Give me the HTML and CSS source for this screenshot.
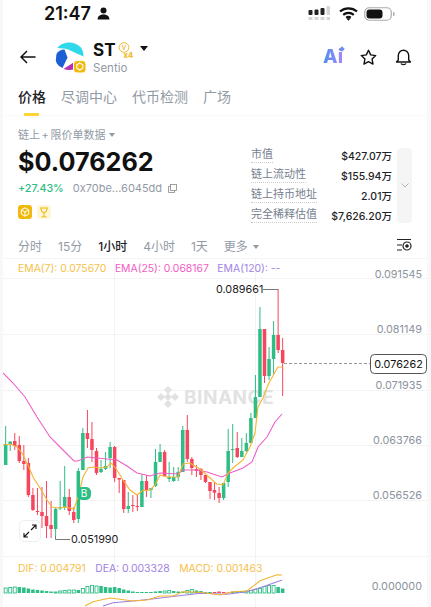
FILE: index.html
```html
<!DOCTYPE html>
<html lang="zh">
  <head>
    <meta charset="utf-8" />
    <title>ST</title>
    <link rel="stylesheet" href="styles.css">
  </head>
  <body>
    <div id="app">
      <div class="status">
        <span class="clock">21:47</span>
        <svg class="person" width="13" height="13" viewBox="0 0 13 13"><circle cx="6.5" cy="3.4" r="3"/><path d="M.6 12.6c0-3.6 2.6-5 5.9-5s5.900 1.400 5.900 5z"/></svg>
        <span class="status-right">
          <svg width="24" height="16" viewBox="0 0 24 16">
            <rect x="0.500" y="4" width="4" height="5" rx="1" fill="#222"/>
            <rect x="6.500" y="3.500" width="4" height="5.500" rx="1" fill="#222"/>
            <rect x="12.500" y="2" width="4" height="7" rx="1" fill="#222"/>
            <rect x="18.500" y="0" width="3.500" height="9" rx="1" fill="#d5d5d5"/>
            <rect x="0.500" y="11" width="4" height="3" fill="#d5d5d5"/>
            <rect x="6.500" y="11" width="4" height="3" fill="#d5d5d5"/>
            <rect x="12.500" y="11" width="4" height="3" fill="#d5d5d5"/>
            <rect x="18.500" y="11" width="3.500" height="3" fill="#d5d5d5"/>
          </svg>
          <svg width="19" height="14" viewBox="0 0 19 14" fill="none" stroke="#111" stroke-width="2.200">
            <path d="M1 4.500c5-4.300 12-4.300 17 0"/>
            <path d="M4.200 7.800c3-2.500 7.600-2.500 10.600 0"/>
            <path d="M7.200 10.600c1.400-1 3.200-1 4.600 0"/>
            <path d="M9.500 13.500l-1.800-2h3.600z" fill="#111" stroke-width="0.500"/>
          </svg>
          <svg width="32" height="14" viewBox="0 0 32 14">
            <rect x="0.750" y="0.750" width="26.500" height="12.500" rx="4.500" fill="#fff" stroke="#aaa" stroke-width="1.200"/>
            <rect x="2.500" y="2.500" width="16" height="9" rx="3" fill="#111"/>
            <rect x="29" y="5" width="1.500" height="4" rx="0.700" fill="#aaa"/>
          </svg>
        </span>
      </div>

      <div class="nav">
        <svg class="back" width="16" height="14" viewBox="0 0 16 14" fill="none" stroke="#111" stroke-width="1.500"><path d="M15.500 7H1M7 1L1 7l6 6"/></svg>
        <svg class="logo" width="33" height="33" viewBox="0 0 33 33">
          <circle cx="16" cy="16" r="15.500" fill="#fff"/>
          <path d="M3.500 7C7 1.500 19-1.500 27 6.500c1.500 2 2.500 5 2.500 9L14 8.500c-3-1.500-7-1-10.500-1.500z" fill="#2fd9ea"/>
          <path d="M2.500 13C4 10 7 8.500 10.500 8.500L13.500 16.500 8.500 27C5 25.500 2 22.500 1.800 19z" fill="#1b5fd4"/>
          <path d="M9.500 28l10-6.500v7c-3 .7-7 .5-10-.5z" fill="#b92fb4"/>
          <rect x="19.500" y="19.500" width="12.500" height="12.500" rx="3.500" fill="#f0b90b" stroke="#fff" stroke-width="1"/>
          <path d="M25.800 22l3 1.800v3.400l-3 1.800-3-1.800v-3.400z" fill="none" stroke="#fff" stroke-width="1.100"/>
        </svg>
        <div class="token">
          <div class="token-top">
            <span class="symbol">ST</span>
            <span class="vbadge">
              <svg width="12" height="11" viewBox="0 0 12 11"><circle cx="6" cy="5.500" r="4.800" fill="none" stroke="#f3b92f" stroke-width="1"/><text x="6" y="7.500" text-anchor="middle" class="vletter">V</text></svg>
              <span class="xfour">x4</span>
            </span>
            <span class="caret caret-black"></span>
          </div>
          <span class="token-name">Sentio</span>
        </div>
        <span class="nav-actions">
          <span class="ai">Ai<i></i></span>
          <svg class="star" width="17" height="17" viewBox="0 0 17 17" fill="none" stroke="#111" stroke-width="1.400" stroke-linejoin="round"><path d="M8.500 1.300l2.200 4.600 5 .7-3.600 3.500.9 5-4.500-2.400L4 15.100l.9-5L1.300 6.600l5-.7z"/></svg>
          <svg width="17" height="18" viewBox="0 0 17 18" fill="none" stroke="#111" stroke-width="1.400" stroke-linejoin="round"><path d="M3.300 12V7.500a5.200 5.200 0 0 1 10.400 0V12l1.800 2H1.500z"/><path d="M6 15.500c.8 1.500 4.200 1.500 5 0"/></svg>
        </span>
      </div>

      <div class="tabs">
        <span class="tab active">价格</span>
        <span class="tab">尽调中心</span>
        <span class="tab">代币检测</span>
        <span class="tab">广场</span>
      </div>

      <div class="info">
        <div class="info-left">
          <div class="source">链上 + 限价单数据 <span class="caret caret-gray"></span></div>
          <div class="price">$0.076262</div>
          <div class="meta">
            <span class="change">+27.43%</span>
            <span class="address">0x70be...6045dd</span>
            <svg width="9" height="9" viewBox="0 0 9 9" fill="none" stroke="#888" stroke-width="0.800"><rect x="2.500" y="0.500" width="6" height="6"/><path d="M2.500 2.500H.5v6h6v-2"/></svg>
          </div>
          <div class="badges">
            <span class="badge badge-bnb">
              <svg width="10" height="10" viewBox="0 0 10 10" fill="none" stroke="#fff" stroke-width="1"><path d="M5 .8l3.700 2.100v4.200L5 9.200 1.300 7.100V2.900zM1.300 2.900L5 5l3.700-2.100M5 5v4.200"/></svg>
            </span>
            <span class="badge badge-cup">
              <svg width="10" height="11" viewBox="0 0 10 11" fill="none" stroke="#f0b90b" stroke-width="1.100"><path d="M.8 1h8.400M2 1c0 3 1 4.500 3 4.500S8 4 8 1M5 5.500v3.500M2.500 9.800h5"/></svg>
            </span>
          </div>
        </div>
        <div class="stats">
          <div class="stat"><span class="stat-label">市值</span><span class="stat-value">$427.07万</span></div>
          <div class="stat"><span class="stat-label">链上流动性</span><span class="stat-value">$155.94万</span></div>
          <div class="stat"><span class="stat-label">链上持币地址</span><span class="stat-value">2.01万</span></div>
          <div class="stat"><span class="stat-label">完全稀释估值</span><span class="stat-value">$7,626.20万</span></div>
        </div>
        <div class="expand">
          <svg width="8" height="5" viewBox="0 0 8 5" fill="none" stroke="#aaa" stroke-width="0.900"><path d="M.5.500L4 4 7.500.5"/></svg>
        </div>
      </div>

      <div class="intervals">
        <span>分时</span>
        <span>15分</span>
        <span class="current">1小时</span>
        <span>4小时</span>
        <span>1天</span>
        <span>更多 <span class="caret caret-gray"></span></span>
        <svg class="tune" width="16" height="14" viewBox="0 0 16 14" fill="none" stroke="#222" stroke-width="1.200"><path d="M1 1.500h14M1 7h5M1 12h5"/><circle cx="11" cy="8" r="4"/><circle cx="11" cy="8" r="1.200" fill="#222"/></svg>
      </div>

      <div class="chart">
        <svg id="plot" width="424" height="349" viewBox="3 258 424 349"></svg>
        <div class="legend legend-ema">
          <span class="c-yellow">EMA(7): 0.075670</span>
          <span class="c-pink">EMA(25): 0.068167</span>
          <span class="c-purple">EMA(120): --</span>
        </div>
        <div class="legend legend-macd">
          <span class="c-yellow">DIF: 0.004791</span>
          <span class="c-purple">DEA: 0.003328</span>
          <span class="c-yellow">MACD: 0.001463</span>
        </div>
        <div class="fullscreen">
          <svg width="14" height="14" viewBox="0 0 14 14" fill="none" stroke="#111" stroke-width="1.100"><path d="M8 6l5-5M9 1h4v4M6 8l-5 5M1 9v4h4"/></svg>
        </div>
      </div>
    </div>
    <script src="chart.js"></script>
  </body>
</html>
```
FILE: styles.css
```css
* { box-sizing: border-box; }

html, body { margin: 0; padding: 0; height: 607px; overflow: hidden; }

body {
    background: #f8f8f8;
    font-family: Inter, "Noto Sans CJK SC", sans-serif;
    color: #1e2329;
}

#app {
    width: 424px;
    height: 607px;
    margin-left: 3px;
    background: #fff;
    overflow: hidden;
}

/* status bar */
.status {
    display: flex;
    align-items: center;
    height: 27px;
    padding-left: 41px;
}

.clock { font-size: 18px; font-weight: 600; color: #111; letter-spacing: 0; }
.person { margin-left: 6px; fill: #111; }

.status-right {
    display: flex;
    align-items: center;
    gap: 6.500px;
    margin-left: auto;
    padding-right: 31px;
}

/* header */
.nav {
    display: flex;
    align-items: center;
    height: 40px;
    margin-top: 10px;
    padding-left: 17px;
}

.back { margin-right: 18px; }
.logo { margin-right: 6px; }
.token { display: flex; flex-direction: column; }
.token-top { display: flex; align-items: center; height: 22px; }
.symbol { font-size: 17px; font-weight: 700; color: #111; }
.vbadge { position: relative; width: 17px; height: 16px; margin-left: 3px; }
.vbadge svg { display: block; }
.vletter { font-size: 6px; font-weight: 600; fill: #f3b92f; }

.xfour {
    position: absolute;
    left: 5px; top: 11px;
    font-size: 7.500px;
    font-weight: 800;
    line-height: 6px;
    color: #f3b92f;
}

.token-name { font-size: 11.500px; color: #929aa5; line-height: 14px; }

.caret {
    display: inline-block;
    width: 0; height: 0;
    border-style: solid;
    border-color: transparent;
    border-bottom-width: 0;
}

.caret-black {
    margin: 0 0 3px 5px;
    border-width: 5px 4px 0;
    border-top-color: #111;
}

.caret-gray {
    margin: 0 0 2px 2px;
    border-width: 4px 3.500px 0;
    border-top-color: #929aa5;
}

.nav-actions {
    display: flex;
    align-items: center;
    gap: 16px;
    margin-left: auto;
    padding-right: 15px;
}

.star { margin-right: 2px; }

.ai {
    position: relative;
    width: 21px;
    font-size: 19px;
    font-weight: 800;
    line-height: 22px;
    background: linear-gradient(90deg, #4f8df2, #a98bf3);
    -webkit-background-clip: text;
    background-clip: text;
    color: transparent;
}

.ai i {
    position: absolute;
    top: 1px; right: 0;
    width: 4px; height: 4px;
    background: #6f8ff0;
    transform: rotate(45deg);
}

/* tabs */
.tabs {
    display: flex;
    gap: 15px;
    height: 39px;
    padding: 12px 0 0 15px;
    font-size: 14px;
    color: #929aa5;
    border-bottom: 1px solid #fafafa;
}

.tab { position: relative; line-height: 16px; }
.tab.active { color: #1e2329; font-weight: 500; }

.tab.active::after {
    content: "";
    position: absolute;
    left: 6px; top: 24px;
    width: 15px; height: 3px;
    background: #fcd535;
}

/* price block */
.info {
    display: flex;
    padding: 12px 15px 0;
}

.info-left { flex: 1; }

.source {
    height: 14px;
    font-size: 11px;
    line-height: 14px;
    word-spacing: -1.500px;
    color: #929aa5;
}

.price {
    height: 34px;
    margin-top: 3px;
    font-size: 25.200px;
    font-weight: 700;
    line-height: 34px;
    color: #111;
}

.meta {
    display: flex;
    align-items: center;
    height: 16px;
    margin-top: 1px;
    gap: 9px;
}

.change { font-size: 10.700px; font-weight: 500; color: #2ebd85; }
.address { margin-right: -3px; font-size: 11px; color: #929aa5; }

.badges { display: flex; gap: 5px; margin-top: 9px; }

.badge {
    display: flex;
    align-items: center;
    justify-content: center;
    width: 14px; height: 14px;
    border-radius: 3px;
}

.badge-bnb { background: #f0b90b; }
.badge-cup { background: #fdf6d8; }

.stats { width: 141px; margin-top: 17px; }

.stat {
    display: flex;
    align-items: center;
    justify-content: space-between;
    height: 20px;
    font-size: 11px;
}

.stat-label {
    line-height: 15px;
    color: #76808f;
    border-bottom: 1px dotted #ccc;
}

.stat-value { font-size: 10.500px; font-weight: 500; color: #1e2329; }

.expand {
    display: flex;
    align-items: center;
    justify-content: center;
    width: 15px; height: 75px;
    margin: 20px 0 0 5px;
    border-radius: 4px;
    background: #f5f5f5;
}

/* interval row */
.intervals {
    display: flex;
    align-items: center;
    gap: 16px;
    height: 26px;
    margin-top: 7px;
    padding: 0 15px;
    font-size: 12px;
    color: #929aa5;
}

.intervals .current { color: #1e2329; font-weight: 500; }
.tune { margin-left: auto; }

/* chart canvas */
.chart {
    position: relative;
    height: 349px;
    border-top: 1px solid #f5f5f5;
}

#plot { position: absolute; left: 0; top: -1px; }

.grid { stroke: #f3f3f3; stroke-width: 1; }
.axis { font-size: 10.800px; fill: #8c939d; text-anchor: end; }
.mark { font-size: 10.800px; fill: #222; }
.leader { stroke: #777; stroke-width: 1; fill: none; }
.last-line { stroke: #999; stroke-width: 1; stroke-dasharray: 3 2; }
.tag { fill: #fff; stroke: #555; stroke-width: 1; }
.tag-text { font-size: 10.800px; fill: #111; text-anchor: middle; }
.wm-icon { fill: #e2e2e2; }
.wm-text { font-size: 19px; font-weight: 700; fill: #e2e2e2; letter-spacing: 0.500px; }
.line { fill: none; stroke-width: 1.100; }
.buy-text { font-size: 10px; fill: #fff; text-anchor: middle; }

.legend {
    position: absolute;
    left: 15px;
    display: flex;
    font-size: 10.400px;
    line-height: 14px;
    white-space: nowrap;
}

.legend-ema { top: 3px; gap: 8.500px; }
.legend-macd { top: 303px; gap: 9.500px; }

.c-yellow { color: #f5c14b; }
.c-pink { color: #f25cc4; }
.c-purple { color: #a183e3; }

.fullscreen {
    position: absolute;
    left: 16px; top: 261px;
    display: flex;
    align-items: center;
    justify-content: center;
    width: 22px; height: 22px;
    border: 1px solid #eee;
    border-radius: 5px;
    background: rgba(255, 255, 255, 0.8);
}
```
FILE: chart.js
```js
// all chart coordinates are screen pixels, the svg viewBox starts at 3,258
var NS = "http://www.w3.org/2000/svg";
var plot = document.getElementById("plot");
var GREEN = "#2ebd85", RED = "#f6465d", YELLOW = "#f3b532", PINK = "#ee5fc8", PURPLE = "#a07fe0";

function add(tag, attrs, text) {
  var el = document.createElementNS(NS, tag);
  for (var k in attrs) el.setAttribute(k, attrs[k]);
  if (text) el.textContent = text;
  plot.appendChild(el);
  return el;
}

function candleX(i) { return 5.67 + 4.541 * i; }

// colour, wick top, wick bottom, body top, body bottom
var candles = [
  ["g",426,465,444,465],["g",441,451,441.7,444],["r",433,450,441,446],["r",436,463,445,461],
  ["r",445,470,461,464],["r",458,497,463,495],["r",488,511,495,510],["r",488,515,511,512],
  ["r",487,528,512,516],["r",481,538,516,526],["r",501,538,525,529],["g",508,537,509,529],
  ["g",481,510,507,508.5],["g",466,510,497,507],["r",489,515,497,511],["r",507,523,512,520],
  ["g",468,523,471,519],["g",428,470,433,470],["r",410,448,433,439],["r",422,462,439,450],
  ["r",448,475,451,473],["g",460,473,469,472],["g",452,470,466,469],["g",442,468,447,458],
  ["r",446,482,447,478],["r",478,493,478,479.5],["r",480,513,480,509],["g",492,513,506,509],
  ["r",495,512,505,506],["r",494,511,506,507],["g",474,507,481,507],["r",475,497,481,490],
  ["g",488,498,488,490],["g",449,487,462,486],["g",444,462,452,462],["r",450,477,452,476],
  ["g",462,482,477,479],["g",467,482,477,481],["g",467,481,472,477],["g",426,472,430,472],
  ["r",415,462,430,459],["r",457,475,459,468],["r",465,477,469,471],["r",468,480,469,475],
  ["r",475,483,475,482],["r",482,499,482,491],["r",482,500,490,492.7],["r",487,503,493,498],
  ["g",483,500,483,498],["g",429,487,451,482],["g",424,463,449,450],["r",432,458,448,457],
  ["g",438,457,451,457],["g",433,452,443,451],["g",413,443,418,443],["g",375,418,397,418],
  ["g",307,397,329,397],["r",329,383,329,376],["g",347,380,359,376],["g",321,375,335,359],
  ["r",289,353,335,350],["r",338,396,350,363]
];

var ema7 = [[3,445],[10,444],[17,447],[22,453],[28,465],[33,477],[40,488],[47,500],[52,507],[58,508],
  [65,507],[70,508],[74,509],[78,497],[83,477],[88,468],[93,467],[100,468],[107,467],[111,463],
  [117,470],[123,480],[130,490],[137,495],[142,491],[150,490],[155,485],[160,475],[167,477],[178,477],
  [183,464],[190,463],[200,469],[210,478],[216.7,484],[223,485],[228,473],[233,468],[243,460],[250,447],
  [255,433],[258,407],[263,398],[268,385],[275,372],[278,367],[282,367]];

var ema25 = [[3,373],[13,383],[25,397],[37,417],[50,437],[63,450],[74,461],[78,461],[87,457],[97,458],
  [107,459],[117,460],[127,466],[137,473],[150,476],[160,473],[178,474],[183,470],[197,470],[207,472],
  [210,473],[222,477],[230,473],[243,468],[252,462],[258,447],[267,437],[275,422],[282,414]];

var dif = [[85,606],[93,601.7],[110,598],[120,599.3],[133,601],[147,600],[160,596],[173,596],[183,591.7],
  [200,592.3],[220,595],[233,591.7],[247,591],[260,580.7],[277,574.7],[282,575]];

var dea = [[103,606],[113,602.7],[133,601],[150,599.3],[177,596],[200,593.3],[227,594.3],[247,591.7],
  [263,586.7],[282,580]];

// height of each macd bar, negative is red; second value 1 = hollow
var macd = [[5.5,1],[6,1],[6.5,1],[6,0],[5.5,0],[4.5,0],[3.5,0],[3,0],[2.5,0],[2,0],[1.5,0],[1.5,1],[2.5,1],[3,1],
  [3.5,1],[3.5,1],[3,0],[5,1],[7,1],[8,1],[7.5,1],[7,0],[6,0],[5.5,0],[6,0],[5,0],[3.5,0],[2.5,0],[1.5,0],[1,0],
  [1,0],[1,0],[1,0],[1.5,0],[2,0],[2.5,1],[3,1],[2,0],[1.5,0],[1.5,0],[3,1],[4,1],[2.5,0],[2,0],[1,0],[1,0],
  [-1,0],[-1.5,0],[-1,0],[-0.5,0],[1.5,0],[2,0],[2,0],[2.5,1],[3,1],[4,1],[5,1],[7,1],[8,1],[8,1],[6,0],[4.5,0]];

function points(list) {
  return list.map(function (p) { return p[0] + "," + p[1]; }).join(" ");
}

// grid
[278.5, 334.5, 390.5, 445.5, 500.5, 556.5].forEach(function (y) {
  add("line", { x1: 3, x2: 427, y1: y, y2: y, "class": "grid" });
});
[114.5, 255.5].forEach(function (x) {
  add("line", { x1: x, x2: x, y1: 258, y2: 607, "class": "grid" });
});

// watermark
add("path", { "class": "wm-icon", d: "M168 386l4 4-4 4-4-4zM161 393l4 4-4 4-4-4zM175 393l4 4-4 4-4-4zM168 393l4 4-4 4-4-4zM168 400l4 4-4 4-4-4z" });
add("text", { "class": "wm-text", x: 184, y: 404 }, "BINANCE");

// candles
candles.forEach(function (c, i) {
  var x = candleX(i), color = c[0] === "g" ? GREEN : RED;
  add("line", { x1: x, x2: x, y1: c[1], y2: c[2], stroke: color, "stroke-width": 1 });
  add("rect", { x: x - 1.75, y: c[3], width: 3.5, height: Math.max(c[4] - c[3], 1), fill: color });
});

add("polyline", { "class": "line", points: points(ema25), stroke: PINK });
add("polyline", { "class": "line", points: points(ema7), stroke: YELLOW });

// buy marker
add("rect", { x: 77, y: 487, width: 14, height: 13, rx: 5, fill: GREEN });
add("text", { "class": "buy-text", x: 84, y: 497 }, "B");

// high and low labels
add("polyline", { "class": "leader", points: "263,289.5 278,289.5" });
add("text", { "class": "mark", x: 216, y: 293 }, "0.089661");
add("polyline", { "class": "leader", points: "55.5,536 55.5,539.5 70,539.5" });
add("text", { "class": "mark", x: 71, y: 543 }, "0.051990");

// macd
macd.forEach(function (m, i) {
  var h = Math.abs(m[0]), x = candleX(i), color = m[0] < 0 ? RED : GREEN;
  if (m[1]) {
    add("rect", { x: x - 1.5, y: 593 - h + 0.5, width: 3, height: h - 0.5, fill: "#fff", stroke: color, "stroke-width": 0.9 });
  } else {
    add("rect", { x: x - 1.75, y: 593 - h, width: 3.5, height: h, fill: color });
  }
});
add("polyline", { "class": "line", points: points(dea), stroke: PURPLE });
add("polyline", { "class": "line", points: points(dif), stroke: YELLOW });

// axis
[["0.091545", 278], ["0.081149", 333], ["0.071935", 389], ["0.063766", 444], ["0.056526", 499], ["0.000000", 590]].forEach(function (a) {
  add("text", { "class": "axis", x: 422, y: a[1] }, a[0]);
});

// last price
add("line", { "class": "last-line", x1: 284, x2: 370, y1: 363.5, y2: 363.5 });
add("rect", { "class": "tag", x: 370.5, y: 354.5, width: 56, height: 19, rx: 4 });
add("text", { "class": "tag-text", x: 398.5, y: 368 }, "0.076262");
```
